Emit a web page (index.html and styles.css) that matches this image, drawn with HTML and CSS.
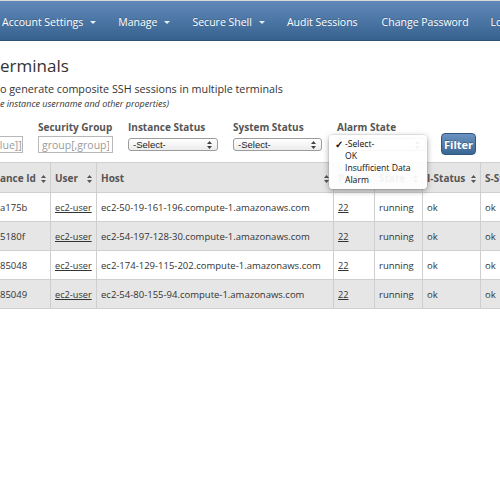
FILE: index.html
```html
<!DOCTYPE html>
<html>
<head>
<meta charset="utf-8">
<link rel="stylesheet" href="styles.css">
</head>
<body>
<nav class="navbar">
  <ul class="nav">
    <li class="nav-item">Account Settings <span class="caret"></span></li>
    <li class="nav-item">Manage <span class="caret"></span></li>
    <li class="nav-item">Secure Shell <span class="caret"></span></li>
    <li class="nav-item">Audit Sessions</li>
    <li class="nav-item">Change Password</li>
    <li class="nav-item">Logout</li>
  </ul>
</nav>
<main class="content">
  <h1 class="title">erminals</h1>
  <p class="lead">o generate composite SSH sessions in multiple terminals</p>
  <p class="note">e instance username and other properties)</p>
  <form class="filters">
    <div class="field field-tags">
      <label class="field-label">&nbsp;</label>
      <input class="text-input tags-input" type="text" placeholder="alue]]">
    </div>
    <div class="field">
      <label class="field-label">Security Group</label>
      <input class="text-input group-input" type="text" placeholder="group[,group]">
    </div>
    <div class="field">
      <label class="field-label">Instance Status</label>
      <div class="select select-instance"><span>-Select-</span><svg class="updown" width="5" height="8" viewBox="0 0 5 8"><path d="M2.5 0 L5 3 L0 3Z M2.5 8 L5 5 L0 5Z" fill="#444"/></svg></div>
    </div>
    <div class="field">
      <label class="field-label">System Status</label>
      <div class="select select-system"><span>-Select-</span><svg class="updown" width="5" height="8" viewBox="0 0 5 8"><path d="M2.5 0 L5 3 L0 3Z M2.5 8 L5 5 L0 5Z" fill="#444"/></svg></div>
    </div>
    <div class="field field-alarm">
      <label class="field-label">Alarm State</label>
      <div class="select select-alarm"><span>-Select-</span><svg class="updown" width="5" height="8" viewBox="0 0 5 8"><path d="M2.5 0 L5 3 L0 3Z M2.5 8 L5 5 L0 5Z" fill="#444"/></svg></div>
      <ul class="menu">
        <li class="menu-item"><span class="check">✓</span>-Select-</li>
        <li class="menu-item">OK</li>
        <li class="menu-item">Insufficient Data</li>
        <li class="menu-item">Alarm</li>
      </ul>
    </div>
    <button class="btn-filter" type="button">Filter</button>
  </form>
  <table class="grid">
    <colgroup>
      <col class="c-id"><col class="c-user"><col class="c-host"><col class="c-port"><col class="c-state"><col class="c-istat"><col class="c-sstat">
    </colgroup>
    <thead>
      <tr>
        <th class="first">ance Id<svg class="sort" width="5" height="8" viewBox="0 0 5 8"><path d="M2.5 0 L5 3 L0 3Z M2.5 8 L5 5 L0 5Z" fill="#555"/></svg></th>
        <th>User<svg class="sort" width="5" height="8" viewBox="0 0 5 8"><path d="M2.5 0 L5 3 L0 3Z M2.5 8 L5 5 L0 5Z" fill="#555"/></svg></th>
        <th>Host<svg class="sort" width="5" height="8" viewBox="0 0 5 8"><path d="M2.5 0 L5 3 L0 3Z M2.5 8 L5 5 L0 5Z" fill="#555"/></svg></th>
        <th>Port<svg class="sort" width="5" height="8" viewBox="0 0 5 8"><path d="M2.5 0 L5 3 L0 3Z M2.5 8 L5 5 L0 5Z" fill="#555"/></svg></th>
        <th>State<svg class="sort" width="5" height="8" viewBox="0 0 5 8"><path d="M2.5 0 L5 3 L0 3Z M2.5 8 L5 5 L0 5Z" fill="#555"/></svg></th>
        <th>I-Status<svg class="sort" width="5" height="8" viewBox="0 0 5 8"><path d="M2.5 0 L5 3 L0 3Z M2.5 8 L5 5 L0 5Z" fill="#555"/></svg></th>
        <th>S-Status<svg class="sort" width="5" height="8" viewBox="0 0 5 8"><path d="M2.5 0 L5 3 L0 3Z M2.5 8 L5 5 L0 5Z" fill="#555"/></svg></th>
      </tr>
    </thead>
    <tbody>
      <tr>
        <td class="first">a175b</td><td><a class="link" href="#">ec2-user</a></td><td>ec2-50-19-161-196.compute-1.amazonaws.com</td><td><a class="link" href="#">22</a></td><td>running</td><td>ok</td><td>ok</td>
      </tr>
      <tr class="alt">
        <td class="first">5180f</td><td><a class="link" href="#">ec2-user</a></td><td>ec2-54-197-128-30.compute-1.amazonaws.com</td><td><a class="link" href="#">22</a></td><td>running</td><td>ok</td><td>ok</td>
      </tr>
      <tr>
        <td class="first">85048</td><td><a class="link" href="#">ec2-user</a></td><td>ec2-174-129-115-202.compute-1.amazonaws.com</td><td><a class="link" href="#">22</a></td><td>running</td><td>ok</td><td>ok</td>
      </tr>
      <tr class="alt">
        <td class="first">85049</td><td><a class="link" href="#">ec2-user</a></td><td>ec2-54-80-155-94.compute-1.amazonaws.com</td><td><a class="link" href="#">22</a></td><td>running</td><td>ok</td><td>ok</td>
      </tr>
    </tbody>
  </table>
</main>
</body>
</html>
```

FILE: styles.css
```css
html, body {
  margin: 0;
  padding: 0;
  width: 500px;
  height: 500px;
  overflow: hidden;
  background: #fff;
}
body {
  font-family: "Open Sans", "Liberation Sans", sans-serif;
  color: #333;
}

/* navbar */
.navbar {
  height: 41px;
  box-sizing: border-box;
  border-top: 1px solid #d9d9d9;
  border-bottom: 1px solid #2c5176;
  background: linear-gradient(#6089b9, #37628f);
}
.nav {
  display: flex;
  align-items: center;
  height: 100%;
  margin: 0 0 0 -9px;
  padding: 3px 0 0;
  box-sizing: border-box;
  list-style: none;
  white-space: nowrap;
}
.nav-item {
  flex-shrink: 0;
  display: flex;
  align-items: center;
  gap: 7px;
  padding: 0 11px;
  color: #fff;
  font-size: 10.5px;
  text-shadow: 0 -1px 0 rgba(0, 0, 0, 0.2);
}
.nav-item:nth-child(5) {
  padding-left: 13px;
}
.caret {
  width: 0;
  height: 0;
  border-top: 3px solid #e8eef5;
  border-left: 3px solid transparent;
  border-right: 3px solid transparent;
}

/* headings */
.content {
  padding-top: 15px;
}
.title {
  margin: 0;
  font-size: 17px;
  line-height: 20px;
  font-weight: normal;
  color: #333;
}
.lead {
  margin: 6px 0 0;
  font-size: 10.75px;
  line-height: 15px;
}
.note {
  margin: 1px 0 0;
  font-size: 9px;
  line-height: 12px;
  font-style: italic;
}

/* filters */
.filters {
  display: flex;
  align-items: flex-start;
  gap: 15px;
  margin-top: 10px;
  height: 35px;
}
.field {
  display: flex;
  flex-direction: column;
  flex-shrink: 0;
}
.field-label {
  font-size: 10px;
  line-height: 14px;
  font-weight: bold;
  color: #555;
  white-space: nowrap;
}
.text-input {
  margin-top: 2px;
  height: 17px;
  box-sizing: border-box;
  border: 1px solid #b8b8b8;
  padding: 0 3px;
  font-family: "Open Sans", sans-serif;
  font-size: 10.5px;
  color: #333;
  outline: none;
}
.text-input::placeholder {
  color: #9a9a9a;
}
.tags-input {
  width: 45px;
  margin-left: -22px;
  padding-left: 15px;
  padding-right: 0;
}
.group-input {
  width: 75px;
}
.select {
  margin-top: 4px;
  height: 13px;
  box-sizing: border-box;
  border: 1px solid #9c9c9c;
  border-radius: 3px;
  background: linear-gradient(#ffffff, #ececec);
  display: flex;
  align-items: center;
  justify-content: space-between;
  padding: 0 5px 0 4px;
  font-family: "Liberation Sans", sans-serif;
  font-size: 9.5px;
  color: #222;
}
.select-instance { width: 90px; }
.select-system { width: 89px; }
.select-alarm { width: 89px; }
.field-alarm {
  position: relative;
}
.menu {
  position: absolute;
  left: -8px;
  top: 15px;
  width: 98px;
  margin: 0;
  padding: 3px 0 3px;
  list-style: none;
  background: rgba(255, 255, 255, 0.93);
  border-radius: 4px;
  box-shadow: 0 2px 6px rgba(0, 0, 0, 0.35), 0 0 0 1px rgba(0, 0, 0, 0.06);
  z-index: 5;
}
.menu-item {
  position: relative;
  padding-left: 16px;
  font-family: "Open Sans", sans-serif;
  font-size: 8.6px;
  line-height: 12px;
  color: #111;
  white-space: nowrap;
}
.check {
  position: absolute;
  left: 6px;
  font-size: 10px;
  font-weight: bold;
}
.btn-filter {
  margin-top: 13px;
  height: 22px;
  width: 35px;
  padding: 0;
  border: 1px solid #2f5780;
  border-radius: 4px;
  background: linear-gradient(#6a93c2, #3a6694);
  color: #fff;
  font-family: "Open Sans", sans-serif;
  font-weight: bold;
  font-size: 11px;
  text-shadow: 0 -1px 0 rgba(0, 0, 0, 0.25);
  flex-shrink: 0;
}

/* table */
.grid {
  margin-top: 7px;
  margin-left: -1px;
  border-collapse: collapse;
  table-layout: fixed;
  width: 560px;
  font-size: 9.5px;
}
.c-id { width: 51px; }
.c-user { width: 46px; }
.c-host { width: 237px; }
.c-port { width: 41px; }
.c-state { width: 48px; }
.c-istat { width: 58px; }
.c-sstat { width: 79px; }
.grid th,
.grid td {
  border: 1px solid #cfcfcf;
  height: 28px;
  padding: 0 4px;
  text-align: left;
  white-space: nowrap;
  overflow: hidden;
}
.grid th {
  height: 29px;
  background: #e5e5e5;
  color: #555;
  font-size: 10px;
  font-weight: bold;
}
.grid .first {
  padding-left: 0;
}
.sort {
  float: right;
  margin-top: 4px;
}
.grid tr.alt td {
  background: #e6e6e6;
}
.link {
  color: #333;
  font-size: 9.2px;
  text-decoration: underline;
}
```
